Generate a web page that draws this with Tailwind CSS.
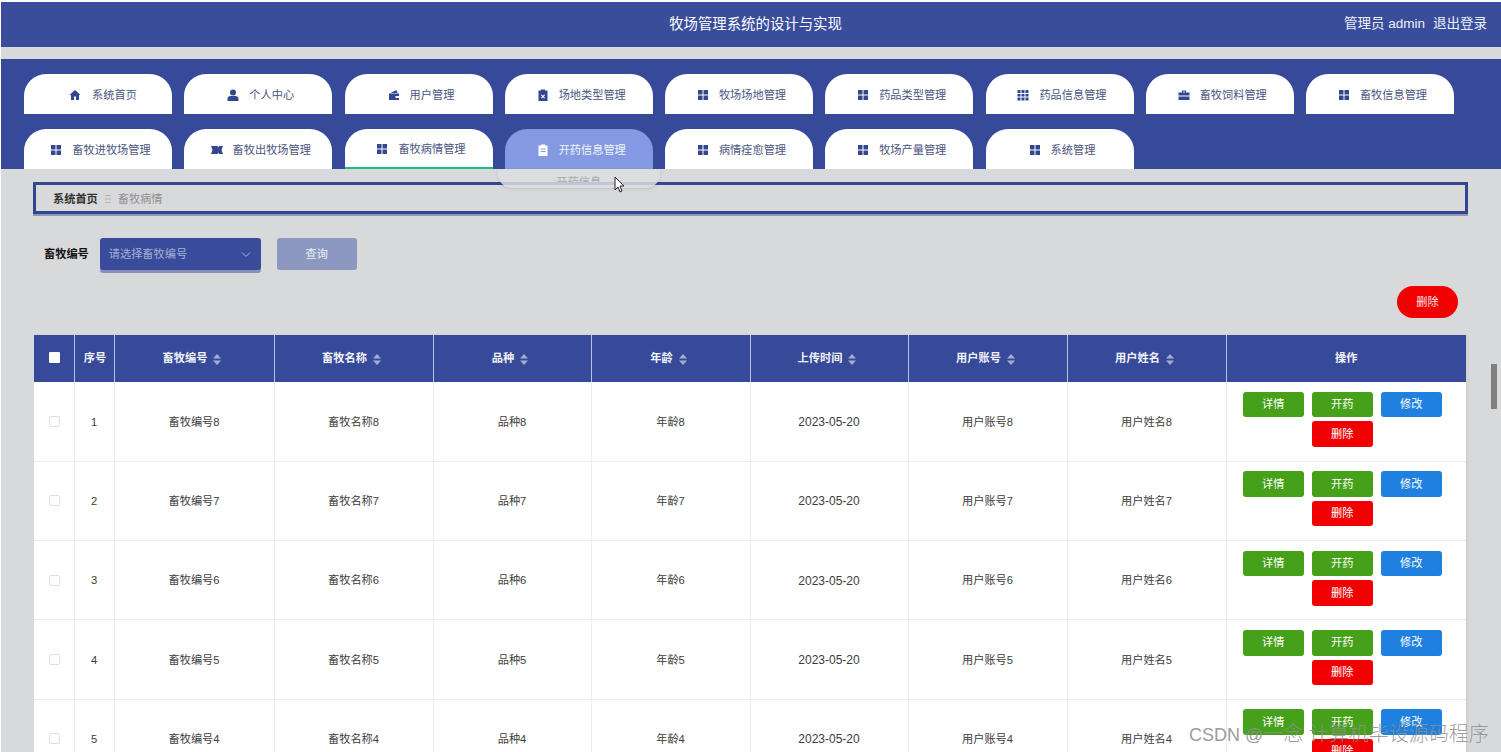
<!DOCTYPE html>
<html lang="zh-CN">
<head>
<meta charset="UTF-8">
<title>牧场管理系统的设计与实现</title>
<script src="https://cdn.jsdelivr.net/npm/@tailwindcss/browser@4"></script>
</head>
<body class="relative w-[1501px] h-[752px] overflow-hidden bg-white pt-[2px] pl-[1px] font-['Liberation_Sans','Noto_Sans_CJK_SC',sans-serif] text-[11.2px]">
<div class="h-[750px] overflow-hidden bg-[#d8d9db]">

  <!-- top bar -->
  <header class="relative flex h-[45px] items-center justify-center bg-[#394d9b] pl-[9px] text-white">
    <h1 class="text-[14.4px] font-normal">牧场管理系统的设计与实现</h1>
    <div class="absolute right-[14px] top-0 flex h-full items-center gap-[8px] text-[13.500px] text-[#eef0f7]">
      <span>管理员 admin</span><span>退出登录</span>
    </div>
  </header>

  <!-- nav -->
  <nav class="mt-[12px] flex h-[110px] flex-wrap content-start gap-x-[12.250px] gap-y-[15px] bg-[#374a99] pl-[23px] pt-[15px] text-[#4b5480]">
    <a class="flex h-[40px] w-[148px] items-center justify-center gap-[11px] rounded-t-[22px] bg-white pl-[10px] pt-[3px]"><svg class="size-[12px] -translate-y-[1px] text-[#33468f]" viewBox="0 0 24 24" fill="currentColor"><path d="M12 2 1 12h3v10h6v-7h4v7h6V12h3z"/></svg>系统首页</a>
    <a class="flex h-[40px] w-[148px] items-center justify-center gap-[10px] rounded-t-[22px] bg-white pl-[5px] pt-[3px]"><svg class="size-[12px] -translate-y-[1px] text-[#33468f]" viewBox="0 0 24 24" fill="currentColor"><circle cx="12" cy="7" r="6"/><path d="M1 24v-4c0-4 3-6 6-6h10c3 0 6 2 6 6v4z"/></svg>个人中心</a>
    <a class="flex h-[40px] w-[148px] items-center justify-center gap-[10px] rounded-t-[22px] bg-white pl-[5px] pt-[3px]"><svg class="size-[12px] -translate-y-[1px] text-[#33468f]" viewBox="0 0 24 24" fill="currentColor"><path fill-rule="evenodd" d="M2 9h20v13H2zM15 14h7v4h-7zM5 8l12-6 2 6z"/></svg>用户管理</a>
    <a class="flex h-[40px] w-[148px] items-center justify-center gap-[10px] rounded-t-[22px] bg-white pl-[5px] pt-[3px]"><svg class="size-[12px] -translate-y-[1px] text-[#33468f]" viewBox="0 0 24 24" fill="currentColor"><path fill-rule="evenodd" d="M3 3h5V1h8v2h5v22H3zM9.500 11 8 12.500l2.500 2.500L8 17.500 9.500 19l2.500-2.500 2.500 2.500 1.500-1.500-2.500-2.500 2.500-2.500-1.500-1.500-2.500 2.500z"/></svg>场地类型管理</a>
    <a class="flex h-[40px] w-[148px] items-center justify-center gap-[10px] rounded-t-[22px] bg-white pl-[5px] pt-[3px]"><svg class="size-[12px] -translate-y-[1px] text-[#33468f]" viewBox="0 0 24 24" fill="currentColor"><path d="M2 2h9v9H2zM13 2h9v9h-9zM2 13h9v9H2zM13 13h9v9h-9z"/></svg>牧场场地管理</a>
    <a class="flex h-[40px] w-[148px] items-center justify-center gap-[10px] rounded-t-[22px] bg-white pl-[5px] pt-[3px]"><svg class="size-[12px] -translate-y-[1px] text-[#33468f]" viewBox="0 0 24 24" fill="currentColor"><path d="M2 2h9v9H2zM13 2h9v9h-9zM2 13h9v9H2zM13 13h9v9h-9z"/></svg>药品类型管理</a>
    <a class="flex h-[40px] w-[148px] items-center justify-center gap-[10px] rounded-t-[22px] bg-white pl-[5px] pt-[3px]"><svg class="size-[12px] -translate-y-[1px] text-[#33468f]" viewBox="0 0 24 24" fill="currentColor"><path d="M1 2h6v6H1zM9 2h6v6H9zM17 2h6v6h-6zM1 10h6v5H1zM9 10h6v5H9zM17 10h6v5h-6zM1 17h6v6H1zM9 17h6v6H9zM17 17h6v6h-6z"/></svg>药品信息管理</a>
    <a class="flex h-[40px] w-[148px] items-center justify-center gap-[10px] rounded-t-[22px] bg-white pl-[5px] pt-[3px]"><svg class="size-[12px] -translate-y-[1px] text-[#33468f]" viewBox="0 0 24 24" fill="currentColor"><path fill-rule="evenodd" d="M8 3h8v4h7v6H1V7h7zM10 5v2h4V5zM1 15h22v7H1z"/></svg>畜牧饲料管理</a>
    <a class="flex h-[40px] w-[148px] items-center justify-center gap-[10px] rounded-t-[22px] bg-white pl-[5px] pt-[3px]"><svg class="size-[12px] -translate-y-[1px] text-[#33468f]" viewBox="0 0 24 24" fill="currentColor"><path d="M2 2h9v9H2zM13 2h9v9h-9zM2 13h9v9H2zM13 13h9v9h-9z"/></svg>畜牧信息管理</a>

    <a class="flex h-[40px] w-[148px] items-center justify-center gap-[10px] rounded-t-[22px] bg-white pl-[5px] pt-[3px]"><svg class="size-[12px] -translate-y-[1px] text-[#33468f]" viewBox="0 0 24 24" fill="currentColor"><path d="M2 2h9v9H2zM13 2h9v9h-9zM2 13h9v9H2zM13 13h9v9h-9z"/></svg>畜牧进牧场管理</a>
    <a class="flex h-[40px] w-[148px] items-center justify-center gap-[10px] rounded-t-[22px] bg-white pl-[5px] pt-[3px]"><svg class="size-[12px] -translate-y-[1px] text-[#33468f]" viewBox="0 0 24 24" fill="currentColor"><path d="M0 4h13l1.500 3 1.500-3h8l-3 8 3 8h-8l-1.500-3-1.500 3H0l3-8z"/></svg>畜牧出牧场管理</a>
    <a class="flex h-[40px] w-[148px] items-center justify-center gap-[10px] rounded-t-[22px] border-b-2 border-[#1fb98a] bg-white pl-[5px] pt-[3px]"><svg class="size-[12px] -translate-y-[1px] text-[#33468f]" viewBox="0 0 24 24" fill="currentColor"><path d="M2 2h9v9H2zM13 2h9v9h-9zM2 13h9v9H2zM13 13h9v9h-9z"/></svg>畜牧病情管理</a>
    <div class="relative h-[40px] w-[148px]">
      <a class="relative z-10 flex h-full items-center justify-center gap-[10px] rounded-t-[22px] bg-[#8499e2] pl-[5px] pt-[3px] text-[#f3f5fc]"><svg class="size-[12px] -translate-y-[1px] text-white" viewBox="0 0 24 24" fill="currentColor"><path fill-rule="evenodd" d="M3 3h5V1h8v2h5v22H3zM7 9v2h10V9zM7 14v2h10v-2z"/></svg>开药信息管理</a>
      <div class="absolute left-[-7px] top-[40px] z-20 h-[19px] w-[162px] rounded-b-[14px] bg-[#dcdddf]/85 pt-[6px] text-center text-[#a9aaad] shadow-[0_1px_3px_rgba(0,0,0,0.12)]"><div class="h-[7px] overflow-hidden leading-[14px]">开药信息</div></div>
    </div>
    <a class="flex h-[40px] w-[148px] items-center justify-center gap-[10px] rounded-t-[22px] bg-white pl-[5px] pt-[3px]"><svg class="size-[12px] -translate-y-[1px] text-[#33468f]" viewBox="0 0 24 24" fill="currentColor"><path d="M2 2h9v9H2zM13 2h9v9h-9zM2 13h9v9H2zM13 13h9v9h-9z"/></svg>病情痊愈管理</a>
    <a class="flex h-[40px] w-[148px] items-center justify-center gap-[10px] rounded-t-[22px] bg-white pl-[5px] pt-[3px]"><svg class="size-[12px] -translate-y-[1px] text-[#33468f]" viewBox="0 0 24 24" fill="currentColor"><path d="M2 2h9v9H2zM13 2h9v9h-9zM2 13h9v9H2zM13 13h9v9h-9z"/></svg>牧场产量管理</a>
    <a class="flex h-[40px] w-[148px] items-center justify-center gap-[10px] rounded-t-[22px] bg-white pl-[5px] pt-[3px]"><svg class="size-[12px] -translate-y-[1px] text-[#33468f]" viewBox="0 0 24 24" fill="currentColor"><path d="M2 2h9v9H2zM13 2h9v9h-9zM2 13h9v9H2zM13 13h9v9h-9z"/></svg>系统管理</a>
  </nav>

  <!-- breadcrumb -->
  <div class="ml-[32px] mt-[13px] flex h-[32px] w-[1435px] items-center border-[3px] border-[#33468f] pl-[17px] pt-[2px] shadow-[0_2px_0_rgba(51,70,143,0.45)]">
    <span class="font-bold text-[#333]">系统首页</span>
    <svg class="mx-[7px] h-[8px] w-[6px] text-[#b5b6b8]" viewBox="0 0 6 8" fill="currentColor"><path d="M0 0h6v1H0zM0 3.500h6v1H0zM0 7h6v1H0z"/></svg>
    <span class="text-[#8e8f92]">畜牧病情</span>
  </div>

  <!-- search -->
  <div class="ml-[43px] mt-[24px] flex h-[32px] items-center">
    <label class="mr-[11px] font-bold text-[#111]">畜牧编号</label>
    <div class="mr-[16px] flex h-[32px] w-[161px] items-center justify-between rounded-[3px] bg-[#384c9b] pl-[9px] pr-[10px] text-[#a4afd6] shadow-[0_3px_0_rgba(56,76,155,0.5)]">
      <span>请选择畜牧编号</span>
      <svg class="size-[10px]" viewBox="0 0 12 12" fill="none" stroke="currentColor" stroke-width="1.200"><path d="M1 4l5 5 5-5"/></svg>
    </div>
    <button class="h-[32px] w-[80px] rounded-[3px] bg-[#8c98c0] text-[#eef0f6]">查询</button>
  </div>

  <div class="mt-[16px] flex justify-end pr-[43px]">
    <button class="h-[32px] w-[61px] rounded-full bg-[#f00000] text-[#f7e6e6]">删除</button>
  </div>

  <!-- table -->
  <table class="ml-[33px] mt-[17px] w-[1432px] table-fixed border-collapse bg-white text-center text-[#3c3c3c] shadow-[2px_0_3px_rgba(0,0,0,0.05)]">
    <colgroup>
      <col class="w-[40px]"><col class="w-[40px]"><col class="w-[160px]"><col class="w-[159px]"><col class="w-[158px]"><col class="w-[159px]"><col class="w-[158px]"><col class="w-[159px]"><col class="w-[159px]"><col class="w-[240px]">
    </colgroup>
    <thead>
      <tr class="h-[47px] bg-[#374a99] font-bold text-[#f1f3f9]">
        <th class="border-r border-[#b9c2de] pl-[2px]"><span class="inline-block size-[11px] translate-y-[1px] rounded-[1px] bg-white"></span></th>
        <th class="border-r border-[#b9c2de] pl-[2px]">序号</th>
        <th class="border-r border-[#b9c2de] pr-[4px]">畜牧编号 <svg class="ml-[3px] inline-block h-[11px] w-[8px] text-[#a5aed0]" viewBox="0 0 8 11" fill="currentColor"><path d="M4 0l4 4.500H0zM0 6.500h8L4 11z"/></svg></th>
        <th class="border-r border-[#b9c2de] pr-[4px]">畜牧名称 <svg class="ml-[3px] inline-block h-[11px] w-[8px] text-[#a5aed0]" viewBox="0 0 8 11" fill="currentColor"><path d="M4 0l4 4.500H0zM0 6.500h8L4 11z"/></svg></th>
        <th class="border-r border-[#b9c2de] pr-[4px]">品种 <svg class="ml-[3px] inline-block h-[11px] w-[8px] text-[#a5aed0]" viewBox="0 0 8 11" fill="currentColor"><path d="M4 0l4 4.500H0zM0 6.500h8L4 11z"/></svg></th>
        <th class="border-r border-[#b9c2de] pr-[4px]">年龄 <svg class="ml-[3px] inline-block h-[11px] w-[8px] text-[#a5aed0]" viewBox="0 0 8 11" fill="currentColor"><path d="M4 0l4 4.500H0zM0 6.500h8L4 11z"/></svg></th>
        <th class="border-r border-[#b9c2de] pr-[4px]">上传时间 <svg class="ml-[3px] inline-block h-[11px] w-[8px] text-[#a5aed0]" viewBox="0 0 8 11" fill="currentColor"><path d="M4 0l4 4.500H0zM0 6.500h8L4 11z"/></svg></th>
        <th class="border-r border-[#b9c2de] pr-[4px]">用户账号 <svg class="ml-[3px] inline-block h-[11px] w-[8px] text-[#a5aed0]" viewBox="0 0 8 11" fill="currentColor"><path d="M4 0l4 4.500H0zM0 6.500h8L4 11z"/></svg></th>
        <th class="border-r border-[#b9c2de] pr-[4px]">用户姓名 <svg class="ml-[3px] inline-block h-[11px] w-[8px] text-[#a5aed0]" viewBox="0 0 8 11" fill="currentColor"><path d="M4 0l4 4.500H0zM0 6.500h8L4 11z"/></svg></th>
        <th>操作</th>
      </tr>
    </thead>
    <tbody>
      <tr class="h-[79.3px] border-b border-[#ebedf2]">
        <td class="border-r border-[#ebedf2] pl-[2px] align-middle"><span class="block mx-auto size-[11px] rounded-[2px] border border-[#dcdfe6] bg-white"></span></td>
        <td class="border-r border-[#ebedf2] pt-[1px]">1</td>
        <td class="border-r border-[#ebedf2] pt-[1px]">畜牧编号8</td>
        <td class="border-r border-[#ebedf2] pt-[1px]">畜牧名称8</td>
        <td class="border-r border-[#ebedf2] pt-[1px]">品种8</td>
        <td class="border-r border-[#ebedf2] pt-[1px]">年龄8</td>
        <td class="border-r border-[#ebedf2] pt-[1px] text-[12px]">2023-05-20</td>
        <td class="border-r border-[#ebedf2] pt-[1px]">用户账号8</td>
        <td class="border-r border-[#ebedf2] pt-[1px]">用户姓名8</td>
        <td class="pb-[4px] pr-[8px]"><div class="mx-auto flex w-[199px] flex-wrap justify-center gap-x-[8px] gap-y-[4px] text-white"><button class="h-[25.500px] w-[61px] rounded-[3px] bg-[#46a019]">详情</button><button class="h-[25.500px] w-[61px] rounded-[3px] bg-[#46a019]">开药</button><button class="h-[25.500px] w-[61px] rounded-[3px] bg-[#2080e0]">修改</button><button class="h-[25.500px] w-[61px] rounded-[3px] bg-[#f00000]">删除</button></div></td>
      </tr>
      <tr class="h-[79.3px] border-b border-[#ebedf2]">
        <td class="border-r border-[#ebedf2] pl-[2px] align-middle"><span class="block mx-auto size-[11px] rounded-[2px] border border-[#dcdfe6] bg-white"></span></td>
        <td class="border-r border-[#ebedf2] pt-[1px]">2</td>
        <td class="border-r border-[#ebedf2] pt-[1px]">畜牧编号7</td>
        <td class="border-r border-[#ebedf2] pt-[1px]">畜牧名称7</td>
        <td class="border-r border-[#ebedf2] pt-[1px]">品种7</td>
        <td class="border-r border-[#ebedf2] pt-[1px]">年龄7</td>
        <td class="border-r border-[#ebedf2] pt-[1px] text-[12px]">2023-05-20</td>
        <td class="border-r border-[#ebedf2] pt-[1px]">用户账号7</td>
        <td class="border-r border-[#ebedf2] pt-[1px]">用户姓名7</td>
        <td class="pb-[4px] pr-[8px]"><div class="mx-auto flex w-[199px] flex-wrap justify-center gap-x-[8px] gap-y-[4px] text-white"><button class="h-[25.500px] w-[61px] rounded-[3px] bg-[#46a019]">详情</button><button class="h-[25.500px] w-[61px] rounded-[3px] bg-[#46a019]">开药</button><button class="h-[25.500px] w-[61px] rounded-[3px] bg-[#2080e0]">修改</button><button class="h-[25.500px] w-[61px] rounded-[3px] bg-[#f00000]">删除</button></div></td>
      </tr>
      <tr class="h-[79.3px] border-b border-[#ebedf2]">
        <td class="border-r border-[#ebedf2] pl-[2px] align-middle"><span class="block mx-auto size-[11px] rounded-[2px] border border-[#dcdfe6] bg-white"></span></td>
        <td class="border-r border-[#ebedf2] pt-[1px]">3</td>
        <td class="border-r border-[#ebedf2] pt-[1px]">畜牧编号6</td>
        <td class="border-r border-[#ebedf2] pt-[1px]">畜牧名称6</td>
        <td class="border-r border-[#ebedf2] pt-[1px]">品种6</td>
        <td class="border-r border-[#ebedf2] pt-[1px]">年龄6</td>
        <td class="border-r border-[#ebedf2] pt-[1px] text-[12px]">2023-05-20</td>
        <td class="border-r border-[#ebedf2] pt-[1px]">用户账号6</td>
        <td class="border-r border-[#ebedf2] pt-[1px]">用户姓名6</td>
        <td class="pb-[4px] pr-[8px]"><div class="mx-auto flex w-[199px] flex-wrap justify-center gap-x-[8px] gap-y-[4px] text-white"><button class="h-[25.500px] w-[61px] rounded-[3px] bg-[#46a019]">详情</button><button class="h-[25.500px] w-[61px] rounded-[3px] bg-[#46a019]">开药</button><button class="h-[25.500px] w-[61px] rounded-[3px] bg-[#2080e0]">修改</button><button class="h-[25.500px] w-[61px] rounded-[3px] bg-[#f00000]">删除</button></div></td>
      </tr>
      <tr class="h-[79.3px] border-b border-[#ebedf2]">
        <td class="border-r border-[#ebedf2] pl-[2px] align-middle"><span class="block mx-auto size-[11px] rounded-[2px] border border-[#dcdfe6] bg-white"></span></td>
        <td class="border-r border-[#ebedf2] pt-[1px]">4</td>
        <td class="border-r border-[#ebedf2] pt-[1px]">畜牧编号5</td>
        <td class="border-r border-[#ebedf2] pt-[1px]">畜牧名称5</td>
        <td class="border-r border-[#ebedf2] pt-[1px]">品种5</td>
        <td class="border-r border-[#ebedf2] pt-[1px]">年龄5</td>
        <td class="border-r border-[#ebedf2] pt-[1px] text-[12px]">2023-05-20</td>
        <td class="border-r border-[#ebedf2] pt-[1px]">用户账号5</td>
        <td class="border-r border-[#ebedf2] pt-[1px]">用户姓名5</td>
        <td class="pb-[4px] pr-[8px]"><div class="mx-auto flex w-[199px] flex-wrap justify-center gap-x-[8px] gap-y-[4px] text-white"><button class="h-[25.500px] w-[61px] rounded-[3px] bg-[#46a019]">详情</button><button class="h-[25.500px] w-[61px] rounded-[3px] bg-[#46a019]">开药</button><button class="h-[25.500px] w-[61px] rounded-[3px] bg-[#2080e0]">修改</button><button class="h-[25.500px] w-[61px] rounded-[3px] bg-[#f00000]">删除</button></div></td>
      </tr>
      <tr class="h-[79.3px] border-b border-[#ebedf2]">
        <td class="border-r border-[#ebedf2] pl-[2px] align-middle"><span class="block mx-auto size-[11px] rounded-[2px] border border-[#dcdfe6] bg-white"></span></td>
        <td class="border-r border-[#ebedf2] pt-[1px]">5</td>
        <td class="border-r border-[#ebedf2] pt-[1px]">畜牧编号4</td>
        <td class="border-r border-[#ebedf2] pt-[1px]">畜牧名称4</td>
        <td class="border-r border-[#ebedf2] pt-[1px]">品种4</td>
        <td class="border-r border-[#ebedf2] pt-[1px]">年龄4</td>
        <td class="border-r border-[#ebedf2] pt-[1px] text-[12px]">2023-05-20</td>
        <td class="border-r border-[#ebedf2] pt-[1px]">用户账号4</td>
        <td class="border-r border-[#ebedf2] pt-[1px]">用户姓名4</td>
        <td class="pb-[4px] pr-[8px]"><div class="mx-auto flex w-[199px] flex-wrap justify-center gap-x-[8px] gap-y-[4px] text-white"><button class="h-[25.500px] w-[61px] rounded-[3px] bg-[#46a019]">详情</button><button class="h-[25.500px] w-[61px] rounded-[3px] bg-[#46a019]">开药</button><button class="h-[25.500px] w-[61px] rounded-[3px] bg-[#2080e0]">修改</button><button class="h-[25.500px] w-[61px] rounded-[3px] bg-[#f00000]">删除</button></div></td>
      </tr>
    </tbody>
  </table>
</div>

<!-- scrollbar thumb, cursor and watermark sit over the page -->
<div class="absolute left-[1491px] top-[364px] h-[45px] w-[6px] bg-[#7f7f7f]"></div>
<svg class="absolute left-[614px] top-[176px] z-30 h-[17px] w-[11px]" viewBox="0 0 11 17"><path d="M1 1v13l3-3 2 5 2-1-2-5h4z" fill="#fff" stroke="#222" stroke-width="1"/></svg>
<div class="absolute left-[1189px] top-[719px] whitespace-nowrap text-[20px] font-light text-[#8f8f8f]/90"><span class="text-[18px]">CSDN @</span>一念 计算机毕设源码程序</div>
</body>
</html>
